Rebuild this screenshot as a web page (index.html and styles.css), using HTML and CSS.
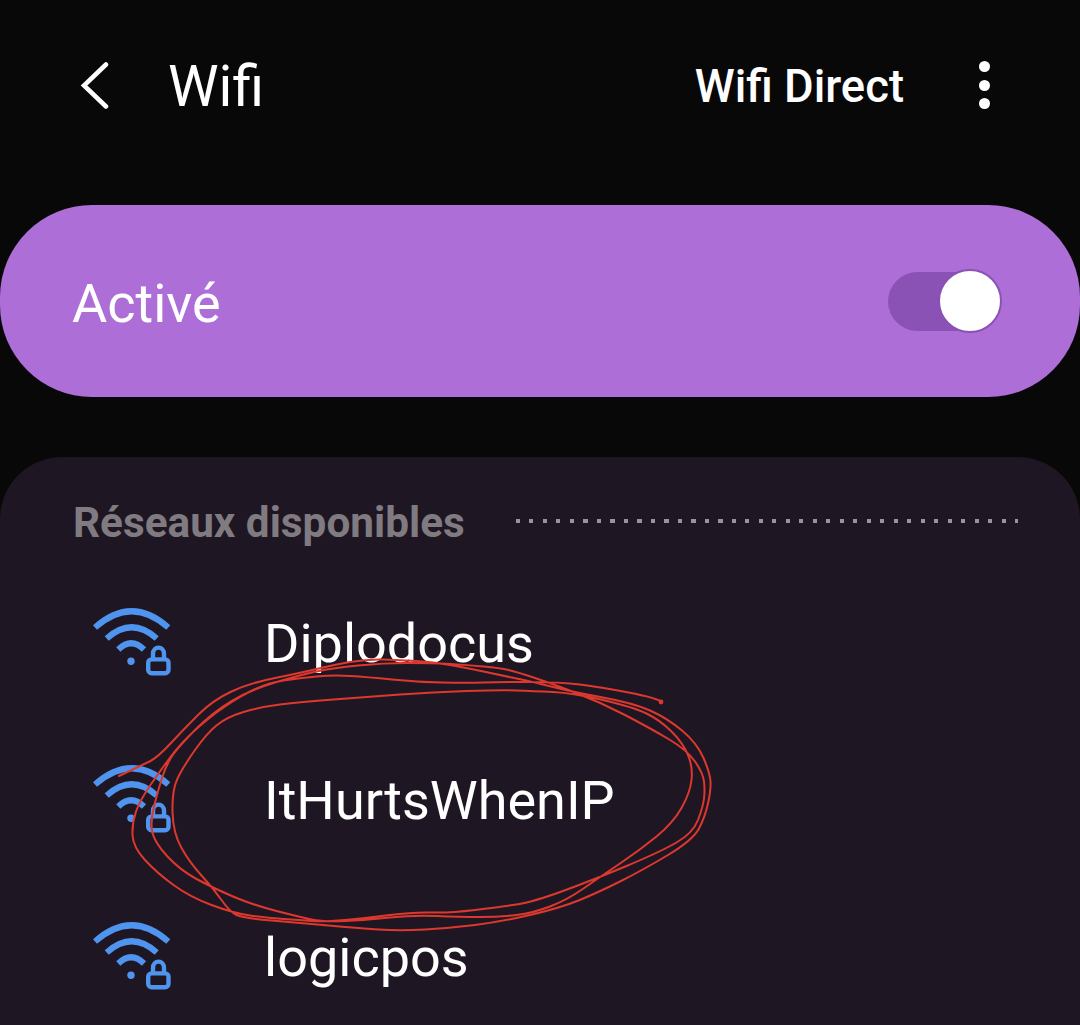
FILE: index.html
```html
<!DOCTYPE html>
<html lang="fr">
<head>
<meta charset="utf-8">
<title>Wifi</title>
<link rel="stylesheet" href="styles.css">
</head>
<body>
<main class="screen">
  <header class="topbar">
    <svg class="back" viewBox="0 0 34 50" aria-hidden="true"><path d="M28 2.500 L6 23.500 L28 44.500"/></svg>
    <h1 class="title">Wifi</h1>
    <span class="direct">Wifi Direct</span>
    <div class="more" aria-hidden="true"><i></i><i></i><i></i></div>
  </header>

  <section class="master">
    <span class="master-label">Activé</span>
    <div class="switch"><div class="thumb"></div></div>
  </section>

  <section class="networks">
    <div class="section-head">
      <h2 class="section-title">Réseaux disponibles</h2>
      <div class="dots"></div>
    </div>
    <ul class="list">
      <li class="net">
        <svg class="wifi" viewBox="0 0 84 72" aria-hidden="true"><use href="#wifi-lock"/></svg>
        <span class="net-name">Diplodocus</span>
      </li>
      <li class="net">
        <svg class="wifi" viewBox="0 0 84 72" aria-hidden="true"><use href="#wifi-lock"/></svg>
        <span class="net-name">ItHurtsWhenIP</span>
      </li>
      <li class="net">
        <svg class="wifi" viewBox="0 0 84 72" aria-hidden="true"><use href="#wifi-lock"/></svg>
        <span class="net-name">logicpos</span>
      </li>
    </ul>
  </section>

  <svg class="defs" aria-hidden="true">
    <symbol id="wifi-lock" viewBox="0 0 84 72">
      <g class="wifi-arcs">
        <path d="M5 19.500 Q41.600 -13 78.300 19.500"/>
        <path d="M16.700 30.500 Q41.700 8 66.700 30.500"/>
        <path d="M28.300 41.500 Q41.200 29 54 41.500"/>
      </g>
      <g class="wifi-lock">
        <path d="M63 51 V46 C63 37.500 74 37.500 74 46 V51"/>
        <rect x="58.200" y="51.400" width="20.300" height="13.900" rx="3.500"/>
      </g>
      <circle class="wifi-dot" cx="41" cy="53.200" r="3.700"/>
    </symbol>
  </svg>

  <svg class="scribble" viewBox="0 0 1080 1025" aria-hidden="true">
    <path d="M662 702 Q657 698 628.5 692.5 T580 684.5 T530 682 T483.5 682.5 T442 682.5 T392 679.5 T350 676 T316.5 676.5 T283.5 680.5 T250 691.5 T216.5 712.5 T189 736 T170.5 757 T151.5 783.5 T136 811.5 T132.5 835 T145 860 T173.5 885 T211.5 905 T250 915.5 T283.5 919 T311.5 921 T345 920 T390 915 T431.5 912.5 T475 910 T516.5 904.5 T563 891 T626.5 866 T676.5 842.5 T698 820 T704 798.5 T704 781.5 T695 761.5 T668.5 739 T625 715 T575 692.5 T533.5 677.5 T508.5 670 T483.5 666.5 T450 664 T408 663 T358 665.5 T316.5 671.5 T275 682.5 T231.5 701 T196.5 728.5 T173.5 754 T162.5 776.5 T154 806.5 T152.5 833 T167.5 856.5 T196.5 879 T233 896.5 T276.5 911 T311.5 919.5 T345 921 T390 917.5 T436.5 916 T480 917 T516.5 915 T550 906.5 T583.5 888.5 T620 863.5 T656.5 836.5 T681.5 808 T691.5 780 T688 755 T671.5 731.5 T646.5 713.5 T603 700 T553 692 T516.5 690.5 T466.5 691 T400 694.5 T333.5 699.5 T280 704.5 T243.5 712 T217 725 T195 750 T177.5 778.5 T172.5 811.5 T181.5 848 T201.5 875.5 T221.5 900 T236.5 915 T271.5 920.5 T328.5 925.5 T378.5 929.5 T425 929.5 T475 925 T530 915 T578.5 900.5 T620 881.5 T668 855 T699 828.5 T708 803.5 T710.5 781.5 T703.5 758 T682 730.5 T650 710.5 T603 697.5 T553 687 T516.5 678.5 T483.5 671.5 T450 665 T416.5 661 T383.5 659.5 T350 662 T316.5 669 T275 678 T231.5 691.5 T198 715 T170.5 743.5 T150.5 761 L119 776"/>
    <circle cx="661" cy="702" r="2.400"/>
  </svg>
</main>
</body>
</html>
```

FILE: styles.css
```css
* { box-sizing: border-box; }
html, body { margin: 0; padding: 0; }
body {
  width: 1080px;
  height: 1025px;
  overflow: hidden;
  background: #080808;
  color: #fff;
  font-family: Roboto, "Noto Sans", sans-serif;
}
.screen { position: relative; width: 1080px; height: 1025px; overflow: hidden; }

.topbar {
  display: flex;
  align-items: center;
  height: 173px;
  padding: 0 90px 0 78px;
}
.back { width: 34px; height: 50px; margin-right: 56px; }
.back path { fill: none; stroke: #fff; stroke-width: 4.5; stroke-linecap: round; stroke-linejoin: miter; }
.title { margin: 0; font-size: 57px; font-weight: 400; line-height: 60px; }
.direct { margin-left: auto; font-size: 45.4px; font-weight: 500; line-height: 52px; }
.more { display: flex; flex-direction: column; gap: 7.5px; margin: 0 0 3px 75px; }
.more i { display: block; width: 11px; height: 11px; border-radius: 50%; background: #fff; }

.master {
  display: flex;
  align-items: center;
  justify-content: space-between;
  height: 192px;
  margin-top: 32px;
  padding: 0 90px 0 72px;
  border-radius: 92px;
  background: #ad6fd7;
}
.master-label { padding-top: 6px; font-size: 54px; line-height: 60px; }
.switch {
  position: relative;
  width: 102px;
  height: 59px;
  border-radius: 30px;
  background: #8a52b4;
}
.thumb {
  position: absolute;
  right: -12px;
  top: -3px;
  width: 64px;
  height: 64px;
  border: 2px solid #8a52b4;
  border-radius: 50%;
  background: #fff;
}

.networks {
  height: 568px;
  margin-top: 60px;
  padding: 43px 0 0;
  border-radius: 62px 62px 0 0;
  background: #1f1623;
}
.section-head { display: flex; align-items: center; gap: 51px; padding: 0 62px 0 73px; height: 44px; }
.section-title { margin: 2px 0 0; font-size: 42.3px; font-weight: 700; line-height: 44px; color: #7f7b80; white-space: nowrap; }
.dots {
  flex: 1;
  height: 4px;
  margin-bottom: 2px;
  background: repeating-linear-gradient(90deg, #9a939c 0 4px, transparent 4px 13.5px);
}
.list { margin: 21px 0 0; padding: 0; list-style: none; }
.net { display: flex; align-items: center; height: 157px; padding-left: 90px; }
.wifi { width: 84px; height: 72px; flex: none; margin-right: 90px; }
.wifi-arcs path { fill: none; stroke: #4f94ee; stroke-width: 6; }
.wifi-lock path, .wifi-lock rect { fill: none; stroke: #4f94ee; stroke-width: 4.4; }
.wifi-dot { fill: #4f94ee; }
.net-name { font-size: 54px; line-height: 60px; }

.defs { position: absolute; width: 0; height: 0; }
.scribble { position: absolute; left: 0; top: 0; width: 1080px; height: 1025px; pointer-events: none; }
.scribble path { fill: none; stroke: #dc382e; stroke-width: 2; stroke-linecap: round; stroke-linejoin: round; }
.scribble circle { fill: #dc382e; }
```
